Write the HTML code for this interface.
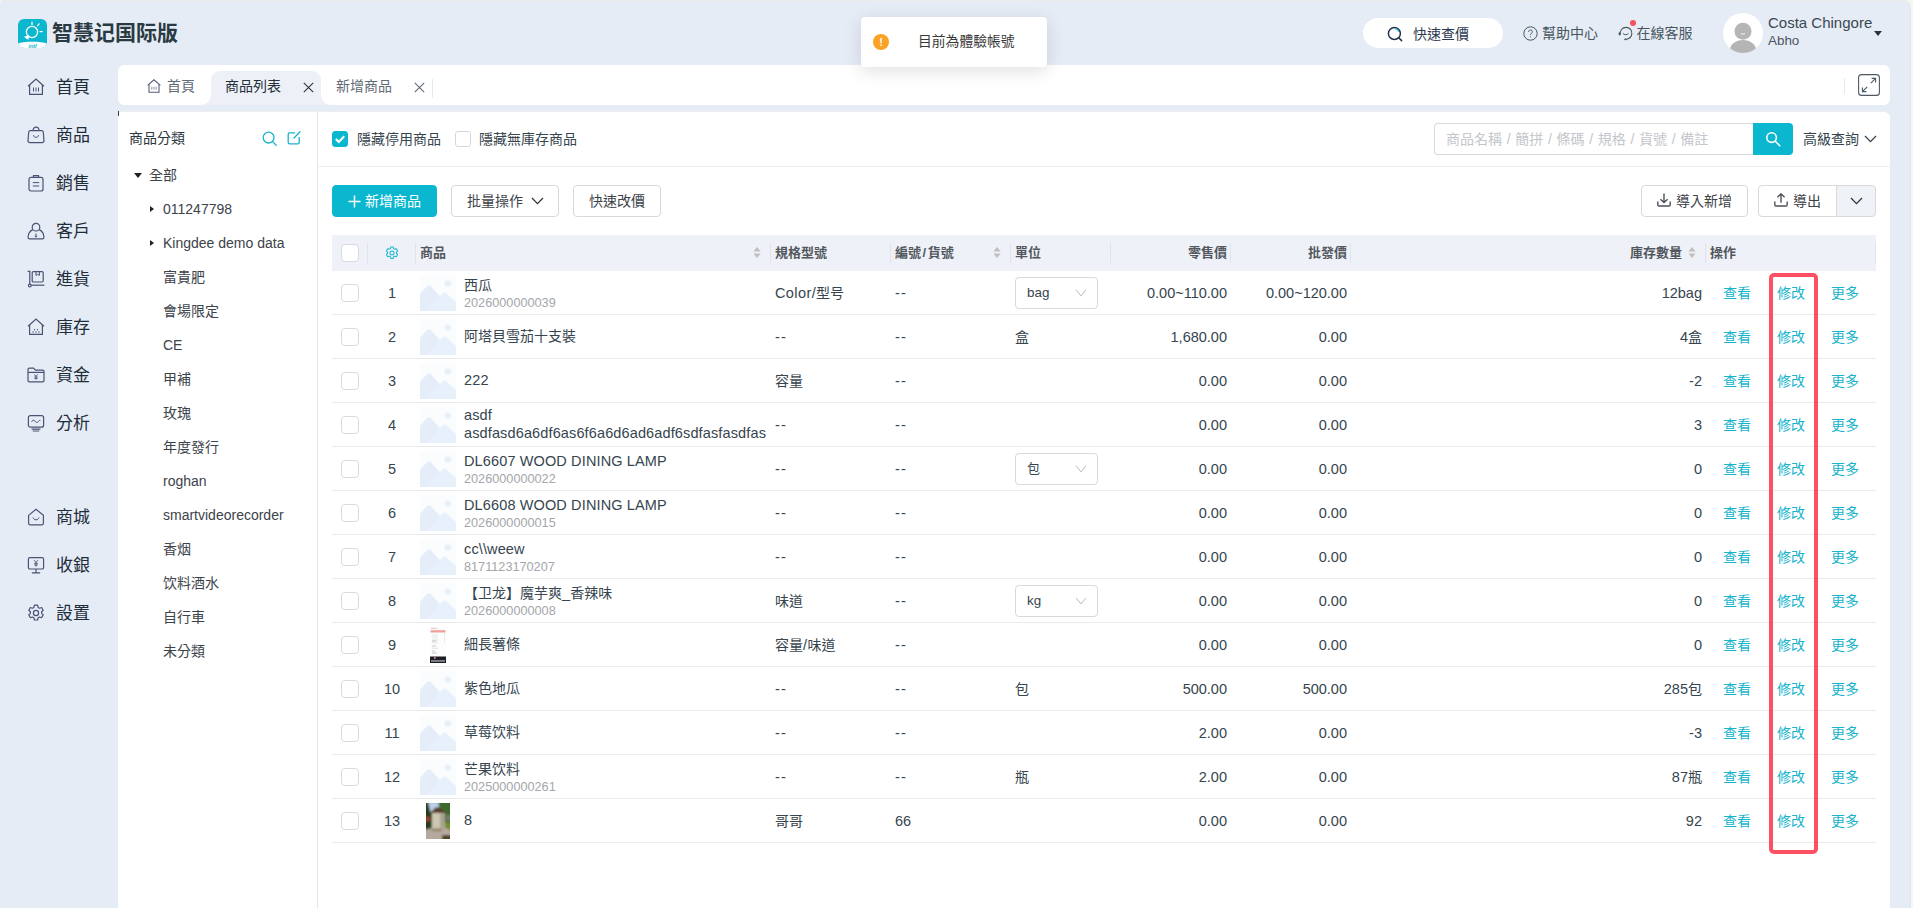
<!DOCTYPE html>
<html lang="zh-Hant">
<head>
<meta charset="utf-8">
<title>商品列表</title>
<style>
*{box-sizing:border-box;margin:0;padding:0}
html,body{width:1913px;height:908px;overflow:hidden;background:#f6f6f6}
body{font-family:"Liberation Sans","Noto Sans CJK TC","Noto Sans CJK SC",sans-serif;color:#36454e;font-size:14px;position:relative}
#app{position:absolute;left:0;top:0;width:1910px;height:920px;background:#e6ecf5;border-radius:4px 8px 0 0;overflow:hidden;box-shadow:inset 0 1px 0 #ecebe9,1px 0 0 #e4e5e7}
.abs{position:absolute}
svg{display:block}
/* logo */
.logo-ic{position:absolute;left:18px;top:19px;width:29px;height:29px;border-radius:6px;background:#0bb7cf;overflow:hidden}
.logo-tx{position:absolute;left:52px;top:17px;height:32px;line-height:32px;font-size:21px;font-weight:700;color:#2b3a42;letter-spacing:0;white-space:nowrap}
/* sidebar */
.nav{position:absolute;left:0;width:118px;height:48px}
.nav svg{position:absolute;left:27px;top:15px}
.nav span{position:absolute;left:56px;top:0;line-height:50px;height:48px;font-size:17px;color:#1f2d3a;white-space:nowrap}
/* top right */
.pill{position:absolute;left:1363px;top:18px;width:140px;height:30px;border-radius:15px;background:#fff}
.pill svg{position:absolute;left:24px;top:8px}
.pill span{position:absolute;left:50px;top:0;line-height:32px;font-size:14px;color:#2b3950}
.tlink{position:absolute;top:18px;height:30px;line-height:30px;font-size:14px;color:#46565f;white-space:nowrap}
.avatar{position:absolute;left:1723px;top:13px;width:40px;height:40px;border-radius:50%;background:#fff;overflow:hidden}
.uname{position:absolute;left:1768px;top:12.5px;font-size:15px;line-height:20px;color:#3a4852;white-space:nowrap}
.ucomp{position:absolute;left:1768px;top:31.5px;font-size:13.4px;line-height:18px;color:#4a5660;white-space:nowrap}
.ucaret{position:absolute;left:1874px;top:31px;width:0;height:0;border-left:4.5px solid transparent;border-right:4.5px solid transparent;border-top:5.5px solid #2a343c}
/* tabs */
.tabs{position:absolute;left:118px;top:65px;width:1772px;height:40px;background:#fff;border-radius:6px}
.tab{position:absolute;top:0;height:40px;line-height:42px;font-size:14px;color:#5f6b76;white-space:nowrap}
.tab-act{position:absolute;left:93px;top:6px;width:110px;height:34px;background:#edf1f7;border-radius:9px 9px 0 0}
.tab-act:before,.tab-act:after{content:"";position:absolute;bottom:0;width:10px;height:10px;background:radial-gradient(circle at 0 0,rgba(237,241,247,0) 9.5px,#edf1f7 10px)}
.tab-act:before{left:-10px}
.tab-act:after{right:-10px;background:radial-gradient(circle at 100% 0,rgba(237,241,247,0) 9.5px,#edf1f7 10px)}
.x{position:absolute;top:16.5px;width:11px;height:11px}
/* category panel */
.cat{position:absolute;left:118px;top:112px;width:200px;height:820px;background:#fff;border-radius:2px 0 0 0;border-right:1px solid #e2e6ee;box-shadow:0 -1px 0 #eeeeee}
.cat h4{position:absolute;left:11px;top:16px;font-size:14px;line-height:20px;font-weight:400;color:#2c363f}
.tree{position:absolute;left:45px;height:34px;line-height:34px;font-size:14px;color:#3c434a;white-space:nowrap}
.car-d{position:absolute;width:0;height:0;border-left:4px solid transparent;border-right:4px solid transparent;border-top:5px solid #222}
.car-r{position:absolute;width:0;height:0;border-top:3.8px solid transparent;border-bottom:3.8px solid transparent;border-left:4.5px solid #222;margin-top:.6px}
/* main */
.main{position:absolute;left:318px;top:112px;width:1572px;height:820px;background:#fff;border-radius:0 6px 0 0;box-shadow:0 -1px 0 #eeeeee}
.hline{position:absolute;left:0;top:54px;width:1572px;height:1px;background:#eeeeee}
.ck{position:absolute;width:16px;height:16px;border-radius:3px;border:1px solid #d4d8de;background:#fff}
.ck.on{background:#0bb7cf;border-color:#0bb7cf}
.lbl{position:absolute;top:17px;line-height:20px;font-size:14px;color:#36454e;white-space:nowrap}
.sinput{position:absolute;left:1116px;top:11px;width:320px;height:32px;border:1px solid #d9d9d9;border-right:0;border-radius:4px 0 0 4px;background:#fff;font-size:14px;line-height:30px;color:#c3c6cb;padding-left:11px;white-space:nowrap;word-spacing:.8px}
.sbtn{position:absolute;left:1435px;top:11px;width:40px;height:32px;background:#0bb7cf;border-radius:0 4px 4px 0}
.adv{position:absolute;left:1485px;top:16px;line-height:22px;font-size:14px;color:#34434c;white-space:nowrap}
.btn{position:absolute;top:73px;height:32px;line-height:30px;border:1px solid #d9d9d9;border-radius:4px;background:#fff;font-size:14px;color:#3c4248;white-space:nowrap}
.btn.pri{background:#0bb7cf;border-color:#0bb7cf;color:#fff}
/* table */
.th{position:absolute;left:14px;top:123px;width:1544px;height:36px;background:#eef1f7;font-size:13px;font-weight:700;color:#53585e}
.th span{position:absolute;top:0;line-height:35px;white-space:nowrap}
.th i{position:absolute;top:8px;width:1px;height:20px;background:#e0e4ea}
.sort{position:absolute;top:12.4px;width:8px;height:11px}
.tb{position:absolute;left:14px;top:159px;width:1544px}
.tr{position:relative;height:44px;border-bottom:1px solid #ebebeb;font-size:14px;color:#36454e}
.l{font-size:14.5px}
.dd{letter-spacing:1.2px}
.spec .l{letter-spacing:.4px}
.spec .dd{letter-spacing:1.2px}
.tr>*{position:absolute}
.cb{left:9px;top:13px;width:18px;height:18px;border:1px solid #d6dae2;border-radius:4px;background:#fff}
.idx{left:36px;width:48px;text-align:center;top:0;line-height:44.5px}
.ph{left:88px;top:4px}
.nm{left:132px;top:0;height:43px;white-space:nowrap}
.nm.one .n1{line-height:42.5px}
.nm.two .n1{line-height:18px;margin-top:5px}
.nm.r4 .n1{line-height:18px;margin-top:2.5px}
.nm .l{letter-spacing:.13px}
.nm.r4 .n1+.n1{margin-top:0}
.nm.two .n2{line-height:16px;font-size:12.7px;color:#a3a6ab;margin-top:.5px}
.c{top:0;line-height:44.5px;white-space:nowrap}
.spec{left:443px}.no{left:563px}.unit{left:683px;width:95px;height:43px}
.ut{position:absolute;left:0;top:0}
.r{text-align:right}
.retail{right:649px}.whole{right:529px}.stock{right:174px}
.sel{position:absolute;left:0;top:6px;width:83px;height:32px;border:1px solid #d9d9d9;border-radius:4px;line-height:30px;font-size:13px}
.sel .l{font-size:13.4px}
.sel>span{position:absolute;left:11px;top:0}
.sel svg{position:absolute;left:59px;top:11px}
.ops{left:1378px;top:0;line-height:45px;white-space:nowrap;font-size:14px}
.ops a{display:inline-block;width:54px;text-align:center;color:#18b4cc}
/* toast */
.toast{position:absolute;left:861px;top:17px;width:186px;height:50px;background:#fff;border-radius:4px;box-shadow:0 4px 18px rgba(0,0,0,.13)}
.toast b{position:absolute;left:12px;top:17px;width:16px;height:16px;border-radius:50%;background:#fba225;color:#fff;font-size:11px;line-height:16px;text-align:center;font-weight:700}
.toast span{position:absolute;left:57px;top:0;line-height:50px;font-size:13.8px;color:#383838;white-space:nowrap}
.red{position:absolute;left:1769px;top:273px;width:49px;height:581px;border:4px solid #fd5065;border-radius:5px}
</style>
</head>
<body>
<div id="app">
<div class="logo-ic"><svg width="29" height="29" viewBox="0 0 29 29"><circle cx="14" cy="13" r="5.6" fill="none" stroke="#fff" stroke-width="1.3"/><path d="M14 3.2v2.4M19.6 6.6l1.6-1.7M22 12.6h2.2" stroke="#fff" stroke-width="1.3" stroke-linecap="round"/><path d="M5.5 17.5c2 .2 3.6-.6 4.6-1.8l1.4 1.6c-.8 1-1.2 2.2-1 3.6-1.200-.8-2.400-1.400-5-3.400z" fill="#fff"/><path d="M0 24.500c5-2.400 24-2.400 29 0V29H0z" fill="#fff"/><text x="14.500" y="28.600" font-size="5.500" font-weight="700" font-style="italic" fill="#0bb7cf" text-anchor="middle" font-family="Liberation Sans, sans-serif">intl</text></svg></div>
<div class="logo-tx">智慧记国际版</div>

<div class="nav" style="top:63px"><svg width="18" height="18" viewBox="0 0 18 18" fill="none" stroke="#4b5274" stroke-width="1.200"><path d="M1 8.200L9 1l8 7.200"/><path d="M2.600 7v9.400h12.800V7"/><path d="M6.500 9.500v4M9 9.500v4M11.500 9.500v4" stroke-width="1"/></svg><span>首頁</span></div>
<div class="nav" style="top:111px"><svg width="18" height="18" viewBox="0 0 18 18" fill="none" stroke="#4b5274" stroke-width="1.200"><path d="M3.500 4.600h11c1 0 1.700.7 1.800 1.600l.7 8.400c.1 1.100-.7 2-1.800 2H2.800c-1.100 0-1.900-.9-1.800-2l.7-8.400c.1-.9.800-1.600 1.800-1.600z"/><path d="M6 4.500C6 2.600 7.300 1.200 9 1.200s3 1.400 3 3.300"/><path d="M6.400 9.200c.5 1.500 1.400 2.200 2.600 2.200s2.100-.7 2.600-2.200" stroke-width="1"/></svg><span>商品</span></div>
<div class="nav" style="top:159px"><svg width="18" height="18" viewBox="0 0 18 18" fill="none" stroke="#4b5274" stroke-width="1.200"><rect x="2" y="3.400" width="14" height="13.600" rx="2"/><path d="M6.500 3.400V1.600h5v1.800"/><path d="M5.800 8.600h6.400M5.800 12h6.400" stroke-width="1"/></svg><span>銷售</span></div>
<div class="nav" style="top:207px"><svg width="18" height="18" viewBox="0 0 18 18" fill="none" stroke="#4b5274" stroke-width="1.200"><circle cx="9" cy="5.200" r="3.800"/><path d="M5.800 7.600C2.800 9 1.200 11.600 1 15.200c0 1 .6 1.600 1.600 1.600h12.800c1 0 1.600-.6 1.600-1.600-.2-3.600-1.800-6.200-4.800-7.600"/><path d="M9 11.500v3.500M7.800 14l1.200 1.200 1.200-1.200" stroke-width="1"/></svg><span>客戶</span></div>
<div class="nav" style="top:255px"><svg width="18" height="18" viewBox="0 0 18 18" fill="none" stroke="#4b5274" stroke-width="1.200"><path d="M.6 1.400h2.200v13.200"/><rect x="5.200" y="1.600" width="11" height="10.400" rx="1.200"/><path d="M9 1.800v3.600l1.700-1 1.700 1V1.800" stroke-width="1"/><circle cx="2.800" cy="15.600" r="1.400"/><path d="M4.200 15.200h13.200"/></svg><span>進貨</span></div>
<div class="nav" style="top:303px"><svg width="18" height="18" viewBox="0 0 18 18" fill="none" stroke="#4b5274" stroke-width="1.200"><path d="M1 8.200L9 1l8 7.200"/><path d="M2.600 7v9.400h12.800V7"/><path d="M5.600 14h1M8.500 14h1M11.400 14h1M7 11.600h1M10 11.600h1" stroke-width="1.300"/></svg><span>庫存</span></div>
<div class="nav" style="top:351px"><svg width="18" height="18" viewBox="0 0 18 18" fill="none" stroke="#4b5274" stroke-width="1.200"><path d="M1 3.600c0-.9.600-1.400 1.400-1.400h4.200l1.800 2h7.200c.9 0 1.400.6 1.400 1.400v8.800c0 .9-.6 1.400-1.400 1.400H2.400c-.9 0-1.400-.6-1.400-1.400z"/><path d="M1 6.400h16"/><path d="M7.400 8.400L9 10.400l1.600-2M9 10.400v3.200M7.400 11h3.200M7.400 12.400h3.200" stroke-width=".9"/></svg><span>資金</span></div>
<div class="nav" style="top:399px"><svg width="18" height="18" viewBox="0 0 18 18" fill="none" stroke="#4b5274" stroke-width="1.200"><rect x="1.400" y="1.600" width="15.200" height="11.600" rx="2"/><path d="M4.600 7.800c1-2 2.200-2.200 3.400-.6s2.400 1.800 3.400.2c.6-.8 1.200-1.200 2-1" stroke-width="1"/><path d="M4.600 15.200h8.800M5.800 17h6.400"/></svg><span>分析</span></div>
<div class="nav" style="top:493px"><svg width="18" height="18" viewBox="0 0 18 18" fill="none" stroke="#4b5274" stroke-width="1.200"><path d="M1.600 7.400L9 1.200l7.400 6.200v7.800c0 1-.6 1.600-1.600 1.600H3.200c-1 0-1.600-.6-1.600-1.600z"/><path d="M6 9.400c.5 1.600 1.500 2.400 3 2.400s2.500-.8 3-2.400" stroke-width="1"/></svg><span>商城</span></div>
<div class="nav" style="top:541px"><svg width="18" height="18" viewBox="0 0 18 18" fill="none" stroke="#4b5274" stroke-width="1.200"><rect x="1.400" y="1.600" width="15.200" height="11.400" rx="1.600"/><path d="M9 13v3.400M4.800 16.800h8.400"/><path d="M7.200 4.200L9 6.600l1.800-2.400M9 6.600v4M7.200 7.400h3.600M7.200 9h3.600" stroke-width=".9"/></svg><span>收銀</span></div>
<div class="nav" style="top:589px"><svg width="18" height="18" viewBox="0 0 18 18" fill="none" stroke="#4b5274" stroke-width="1.200"><path d="M7.400 1.200h3.200l.5 2.200 1.400.8 2.100-.7 1.600 2.800-1.600 1.500v1.600l1.600 1.500-1.600 2.800-2.100-.7-1.400.8-.5 2.200H7.400l-.5-2.200-1.400-.8-2.100.7-1.600-2.800 1.600-1.500V7.800L1.800 6.300l1.600-2.800 2.100.7 1.400-.8z" stroke-linejoin="round"/><circle cx="9" cy="9" r="2.600"/></svg><span>設置</span></div>

<div class="pill"><svg width="16" height="16" viewBox="0 0 16 16" fill="none"><circle cx="7.400" cy="7.400" r="6" stroke="#23314d" stroke-width="1.500"/><path d="M11.800 11.800l2.800 2.800" stroke="#23314d" stroke-width="1.500" stroke-linecap="round"/><path d="M8 2.600c1.800.2 3.200 1.400 3.600 3.200" stroke="#21c1d6" stroke-width="1.200"/></svg><span>快速查價</span></div>
<div class="tlink" style="left:1523px"><svg class="abs" style="left:0;top:8px" width="15" height="15" viewBox="0 0 15 15" fill="none" stroke="#46565f"><circle cx="7.500" cy="7.500" r="6.700" stroke-width="1"/><path d="M5.600 6c0-1.200.8-2 1.900-2s1.900.8 1.900 1.800c0 1.500-1.900 1.500-1.900 3.100" stroke-width="1"/><circle cx="7.500" cy="10.800" r=".6" fill="#46565f" stroke="none"/></svg><span style="margin-left:19px">幫助中心</span></div>
<div class="tlink" style="left:1617px"><svg class="abs" style="left:.5px;top:8px" width="16" height="15" viewBox="0 0 16 15" fill="none" stroke="#46565f" stroke-width="1.100"><path d="M2.300 8.400C1.600 4.600 4.300 1.400 8 1.400c3.800 0 6.400 3 5.800 6.800-.4 2.700-2.300 4.600-5.200 5"/><path d="M4.900 7.400c1 1.700 4.600 1.700 5.600 0" stroke-width="1"/><rect x=".7" y="6.300" width="1.900" height="3.200" rx=".9" fill="#46565f" stroke="none"/><ellipse cx="7.600" cy="13.300" rx="1.500" ry=".9" fill="#46565f" stroke="none"/></svg><i class="abs" style="left:13px;top:2px;width:6px;height:6px;border-radius:50%;background:#f4515c"></i><span style="margin-left:19.500px">在線客服</span></div>
<div class="avatar"><svg width="40" height="40" viewBox="0 0 40 40"><circle cx="20" cy="18.300" r="8.500" fill="#b5b5b5"/><ellipse cx="20" cy="37.500" rx="13.200" ry="10.500" fill="#b5b5b5"/><path d="M18.300 20.300c.5 1.200 2.900 1.200 3.400 0" stroke="#f2f2f2" stroke-width="1.100" fill="none"/></svg></div>
<div class="uname">Costa Chingore</div>
<div class="ucomp">Abho</div>
<div class="ucaret"></div>

<div class="tabs">
<div class="tab-act"></div>
<svg class="abs" style="left:29px;top:14px" width="14" height="14" viewBox="0 0 14 14" fill="none" stroke="#555c7a" stroke-width="1.100"><path d="M.6 6.400L7 .8l6.400 5.600"/><path d="M2 5.400v7.800h10V5.400"/><path d="M4.800 7.800v2.800M7 7.800v2.800M9.200 7.800v2.800" stroke-width=".7"/></svg>
<div class="tab" style="left:49px">首頁</div>
<div class="tab" style="left:107px;color:#242e38">商品列表</div>
<svg class="x" style="left:184.5px" viewBox="0 0 11 11"><path d="M.8.800l9.400 9.400M10.200.8L.8 10.200" stroke="#2c363f" stroke-width="1.100"/></svg>
<div class="tab" style="left:218px">新增商品</div>
<svg class="x" style="left:295.5px" viewBox="0 0 11 11"><path d="M.8.800l9.400 9.400M10.200.8L.8 10.200" stroke="#5f6b76" stroke-width="1.100"/></svg>
<i class="abs" style="left:314px;top:14px;width:1px;height:19px;background:#e6e9ee"></i>
<i class="abs" style="left:1726px;top:13px;width:1px;height:16px;background:#e6e9ee"></i>
<svg class="abs" style="left:1740px;top:9px" width="22" height="22" viewBox="0 0 22 22" fill="none" stroke="#4e5a66" stroke-width="1.100"><rect x=".6" y=".6" width="20.800" height="20.800" rx="3"/><path d="M12.800 9.200l4.600-4.600M13.600 4.400h4v4M9.200 12.800l-4.600 4.600M4.400 13.600v4h4"/></svg>
</div>

<div class="cat">
<h4>商品分類</h4>
<svg class="abs" style="left:144px;top:18.500px" width="15" height="15" viewBox="0 0 15 15" fill="none" stroke="#18b4cc" stroke-width="1.300"><circle cx="6.600" cy="6.600" r="5.400"/><path d="M10.600 10.600l3.600 3.600" stroke-linecap="round"/></svg>
<svg class="abs" style="left:169px;top:19px" width="14" height="14" viewBox="0 0 14 14" fill="none" stroke="#18b4cc" stroke-width="1.300"><path d="M8 1.800H2.600c-.8 0-1.400.6-1.400 1.400v8.200c0 .8.600 1.400 1.400 1.400h8.200c.8 0 1.400-.6 1.400-1.400V6"/><path d="M7 7l6-6.200" stroke-linecap="round"/></svg>
<i class="car-d" style="left:16px;top:60.500px"></i>
<div class="tree" style="left:31px;top:45.5px;font-size:14px">全部</div>
<i class="car-r" style="left:32px;top:93.0px"></i>
<div class="tree" style="top:80.0px">011247798</div>
<i class="car-r" style="left:32px;top:127.0px"></i>
<div class="tree" style="top:114.0px">Kingdee demo data</div>
<div class="tree" style="top:148.0px">富貴肥</div>
<div class="tree" style="top:182.0px">會場限定</div>
<div class="tree" style="top:216.0px">CE</div>
<div class="tree" style="top:250.0px">甲補</div>
<div class="tree" style="top:284.0px">玫瑰</div>
<div class="tree" style="top:318.0px">年度發行</div>
<div class="tree" style="top:352.0px">roghan</div>
<div class="tree" style="top:386.0px">smartvideorecorder</div>
<div class="tree" style="top:420.0px">香烟</div>
<div class="tree" style="top:454.0px">饮料酒水</div>
<div class="tree" style="top:488.0px">自行車</div>
<div class="tree" style="top:522.0px">未分類</div>
</div>
<div class="main">
<span class="ck on" style="left:14px;top:19px"><svg width="14" height="14" viewBox="0 0 14 14" fill="none" stroke="#fff" stroke-width="2"><path d="M2.800 7l3 3 5.400-5.800"/></svg></span>
<span class="lbl" style="left:39px">隱藏停用商品</span>
<span class="ck" style="left:137px;top:19px"></span>
<span class="lbl" style="left:161px">隱藏無庫存商品</span>
<div class="sinput">商品名稱 / 簡拼 / 條碼 / 規格 / 貨號 / 備註</div>
<div class="sbtn"><svg class="abs" style="left:12px;top:8px" width="16" height="16" viewBox="0 0 16 16" fill="none" stroke="#fff" stroke-width="1.600"><circle cx="6.600" cy="6.600" r="4.800"/><path d="M10.200 10.200l4.600 4.600" stroke-linecap="round"/></svg></div>
<div class="adv">高級查詢<svg class="abs" style="left:60.5px;top:7px" width="13" height="8" viewBox="0 0 13 8" fill="none" stroke="#34434c" stroke-width="1.300"><path d="M1 1l5.500 5.600L12 1"/></svg></div>
<div class="hline"></div>
<div class="btn pri" style="left:14px;width:105px"><svg class="abs" style="left:15px;top:8.500px" width="13" height="13" viewBox="0 0 13 13" stroke="#fff" stroke-width="1.500"><path d="M6.500 .5v12M.5 6.500h12"/></svg><span class="abs" style="left:32px;top:0">新增商品</span></div>
<div class="btn" style="left:133px;width:108px"><span class="abs" style="left:15px;top:0">批量操作</span><svg class="abs" style="left:79px;top:11px" width="13" height="8" viewBox="0 0 13 8" fill="none" stroke="#2c363f" stroke-width="1.300"><path d="M1 1l5.500 5.600L12 1"/></svg></div>
<div class="btn" style="left:255px;width:88px"><span class="abs" style="left:15px;top:0">快速改價</span></div>
<div class="btn" style="left:1323px;width:107px"><svg class="abs" style="left:15px;top:7px" width="14" height="14" viewBox="0 0 14 14" fill="none" stroke="#4c5258" stroke-width="1.400"><path d="M7 .6v8.800M3.400 6.200L7 9.600l3.600-3.400M.8 8.600v3.200c0 .8.400 1.200 1.200 1.200h10c.8 0 1.200-.4 1.200-1.200V8.600"/></svg><span class="abs" style="left:34px;top:0">導入新增</span></div>
<div class="btn" style="left:1440px;width:79px;border-radius:4px 0 0 4px"><svg class="abs" style="left:15px;top:7px" width="14" height="14" viewBox="0 0 14 14" fill="none" stroke="#4c5258" stroke-width="1.400"><path d="M7 9.800V1M3.400 4.200L7 .8l3.600 3.400M.8 8.600v3.200c0 .8.400 1.200 1.200 1.200h10c.8 0 1.200-.4 1.200-1.200V8.600"/></svg><span class="abs" style="left:34px;top:0">導出</span></div>
<div class="btn" style="left:1518px;width:40px;border-radius:0 4px 4px 0;background:#eff2f7"><svg class="abs" style="left:13px;top:11px" width="13" height="8" viewBox="0 0 13 8" fill="none" stroke="#2c363f" stroke-width="1.300"><path d="M1 1l5.500 5.600L12 1"/></svg></div>

<div class="th">
<span class="cb" style="position:absolute;left:9px;top:9px"></span>
<i style="left:35px"></i>
<svg class="abs" style="left:53px;top:11px" width="14" height="14" viewBox="0 0 18 18" fill="none" stroke="#18b4cc" stroke-width="1.300"><path d="M7.400 1.200h3.200l.5 2.200 1.400.8 2.100-.7 1.600 2.800-1.600 1.500v1.600l1.600 1.500-1.600 2.800-2.100-.7-1.400.8-.5 2.200H7.400l-.5-2.200-1.400-.8-2.100.7-1.600-2.800 1.600-1.500V7.800L1.800 6.300l1.600-2.800 2.100.7 1.400-.8z" stroke-linejoin="round"/><circle cx="9" cy="9" r="2.600"/></svg>
<i style="left:83px"></i>
<span style="left:88px">商品</span>
<svg class="sort" style="left:421px" viewBox="0 0 8 11"><path d="M4 0l3.600 4.400H.4z" fill="#bfbfbf"/><path d="M4 11L.4 6.600h7.200z" fill="#bfbfbf"/></svg>
<i style="left:438px"></i>
<span style="left:443px">規格型號</span>
<i style="left:558px"></i>
<span style="left:563px">編號<b style="margin:0 1.500px;font-weight:700">/</b>貨號</span>
<svg class="sort" style="left:661px" viewBox="0 0 8 11"><path d="M4 0l3.600 4.400H.4z" fill="#bfbfbf"/><path d="M4 11L.4 6.600h7.200z" fill="#bfbfbf"/></svg>
<i style="left:678px"></i>
<span style="left:683px">單位</span>
<i style="left:778px"></i>
<span style="right:649px">零售價</span>
<i style="left:898px"></i>
<span style="right:529px">批發價</span>
<i style="left:1018px"></i>
<span style="right:194px">庫存數量</span>
<svg class="sort" style="left:1356px" viewBox="0 0 8 11"><path d="M4 0l3.600 4.400H.4z" fill="#bfbfbf"/><path d="M4 11L.4 6.600h7.200z" fill="#bfbfbf"/></svg>
<i style="left:1373px"></i>
<span style="left:1378px">操作</span>
<i style="left:1543px"></i>
</div>

<div class="tb">
<div class="tr"><span class="cb"></span><span class="idx l">1</span><svg class="ph" width="36" height="36" viewBox="0 0 36 36"><rect width="36" height="36" fill="#fafcfe"/><circle cx="27.700" cy="8.500" r="3.300" fill="#e8f0fa"/><path d="M0 36V18.800L7.200 11.200Q9 9.600 10.800 11.200L32 34v2z" fill="#e5edf8"/><path d="M6 36l16.800-17.800q1.800-1.600 3.600 0L36 27v9z" fill="#e7f0fb"/></svg><div class="nm two"><div class="n1">西瓜</div><div class="n2">2026000000039</div></div><span class="c spec"><span class="l">Color/</span>型号</span><span class="c no"><span class="l dd">--</span></span><span class="c unit"><div class="sel"><span><span class="l">bag</span></span><svg width="12" height="8" viewBox="0 0 12 8"><path d="M1 .8l5 6.200L11 .8" fill="none" stroke="#b9bcc1" stroke-width="1"/></svg></div></span><span class="c r retail"><span class="l">0.00~110.00</span></span><span class="c r whole"><span class="l">0.00~120.00</span></span><span class="c r stock"><span class="l">12bag</span></span><span class="ops"><a>查看</a><a>修改</a><a>更多</a></span></div>
<div class="tr"><span class="cb"></span><span class="idx l">2</span><svg class="ph" width="36" height="36" viewBox="0 0 36 36"><rect width="36" height="36" fill="#fafcfe"/><circle cx="27.700" cy="8.500" r="3.300" fill="#e8f0fa"/><path d="M0 36V18.800L7.200 11.200Q9 9.600 10.800 11.200L32 34v2z" fill="#e5edf8"/><path d="M6 36l16.800-17.800q1.800-1.600 3.600 0L36 27v9z" fill="#e7f0fb"/></svg><div class="nm one"><div class="n1">阿塔貝雪茄十支裝</div></div><span class="c spec"><span class="l dd">--</span></span><span class="c no"><span class="l dd">--</span></span><span class="c unit"><span class="ut">盒</span></span><span class="c r retail"><span class="l">1,680.00</span></span><span class="c r whole"><span class="l">0.00</span></span><span class="c r stock"><span class="l">4</span>盒</span><span class="ops"><a>查看</a><a>修改</a><a>更多</a></span></div>
<div class="tr"><span class="cb"></span><span class="idx l">3</span><svg class="ph" width="36" height="36" viewBox="0 0 36 36"><rect width="36" height="36" fill="#fafcfe"/><circle cx="27.700" cy="8.500" r="3.300" fill="#e8f0fa"/><path d="M0 36V18.800L7.200 11.200Q9 9.600 10.800 11.200L32 34v2z" fill="#e5edf8"/><path d="M6 36l16.800-17.800q1.800-1.600 3.600 0L36 27v9z" fill="#e7f0fb"/></svg><div class="nm one"><div class="n1"><span class="l">222</span></div></div><span class="c spec">容量</span><span class="c no"><span class="l dd">--</span></span><span class="c unit"></span><span class="c r retail"><span class="l">0.00</span></span><span class="c r whole"><span class="l">0.00</span></span><span class="c r stock"><span class="l">-2</span></span><span class="ops"><a>查看</a><a>修改</a><a>更多</a></span></div>
<div class="tr"><span class="cb"></span><span class="idx l">4</span><svg class="ph" width="36" height="36" viewBox="0 0 36 36"><rect width="36" height="36" fill="#fafcfe"/><circle cx="27.700" cy="8.500" r="3.300" fill="#e8f0fa"/><path d="M0 36V18.800L7.200 11.200Q9 9.600 10.800 11.200L32 34v2z" fill="#e5edf8"/><path d="M6 36l16.800-17.800q1.800-1.600 3.600 0L36 27v9z" fill="#e7f0fb"/></svg><div class="nm two r4"><div class="n1"><span class="l">asdf</span></div><div class="n1"><span class="l">asdfasd6a6df6as6f6a6d6ad6adf6sdfasfasdfas</span></div></div><span class="c spec"><span class="l dd">--</span></span><span class="c no"><span class="l dd">--</span></span><span class="c unit"></span><span class="c r retail"><span class="l">0.00</span></span><span class="c r whole"><span class="l">0.00</span></span><span class="c r stock"><span class="l">3</span></span><span class="ops"><a>查看</a><a>修改</a><a>更多</a></span></div>
<div class="tr"><span class="cb"></span><span class="idx l">5</span><svg class="ph" width="36" height="36" viewBox="0 0 36 36"><rect width="36" height="36" fill="#fafcfe"/><circle cx="27.700" cy="8.500" r="3.300" fill="#e8f0fa"/><path d="M0 36V18.800L7.200 11.200Q9 9.600 10.800 11.200L32 34v2z" fill="#e5edf8"/><path d="M6 36l16.800-17.800q1.800-1.600 3.600 0L36 27v9z" fill="#e7f0fb"/></svg><div class="nm two"><div class="n1"><span class="l">DL6607 WOOD DINING LAMP</span></div><div class="n2">2026000000022</div></div><span class="c spec"><span class="l dd">--</span></span><span class="c no"><span class="l dd">--</span></span><span class="c unit"><div class="sel"><span>包</span><svg width="12" height="8" viewBox="0 0 12 8"><path d="M1 .8l5 6.200L11 .8" fill="none" stroke="#b9bcc1" stroke-width="1"/></svg></div></span><span class="c r retail"><span class="l">0.00</span></span><span class="c r whole"><span class="l">0.00</span></span><span class="c r stock"><span class="l">0</span></span><span class="ops"><a>查看</a><a>修改</a><a>更多</a></span></div>
<div class="tr"><span class="cb"></span><span class="idx l">6</span><svg class="ph" width="36" height="36" viewBox="0 0 36 36"><rect width="36" height="36" fill="#fafcfe"/><circle cx="27.700" cy="8.500" r="3.300" fill="#e8f0fa"/><path d="M0 36V18.800L7.200 11.200Q9 9.600 10.800 11.200L32 34v2z" fill="#e5edf8"/><path d="M6 36l16.800-17.800q1.800-1.600 3.600 0L36 27v9z" fill="#e7f0fb"/></svg><div class="nm two"><div class="n1"><span class="l">DL6608 WOOD DINING LAMP</span></div><div class="n2">2026000000015</div></div><span class="c spec"><span class="l dd">--</span></span><span class="c no"><span class="l dd">--</span></span><span class="c unit"></span><span class="c r retail"><span class="l">0.00</span></span><span class="c r whole"><span class="l">0.00</span></span><span class="c r stock"><span class="l">0</span></span><span class="ops"><a>查看</a><a>修改</a><a>更多</a></span></div>
<div class="tr"><span class="cb"></span><span class="idx l">7</span><svg class="ph" width="36" height="36" viewBox="0 0 36 36"><rect width="36" height="36" fill="#fafcfe"/><circle cx="27.700" cy="8.500" r="3.300" fill="#e8f0fa"/><path d="M0 36V18.800L7.200 11.200Q9 9.600 10.800 11.200L32 34v2z" fill="#e5edf8"/><path d="M6 36l16.800-17.800q1.800-1.600 3.600 0L36 27v9z" fill="#e7f0fb"/></svg><div class="nm two"><div class="n1"><span class="l">cc\\weew</span></div><div class="n2">8171123170207</div></div><span class="c spec"><span class="l dd">--</span></span><span class="c no"><span class="l dd">--</span></span><span class="c unit"></span><span class="c r retail"><span class="l">0.00</span></span><span class="c r whole"><span class="l">0.00</span></span><span class="c r stock"><span class="l">0</span></span><span class="ops"><a>查看</a><a>修改</a><a>更多</a></span></div>
<div class="tr"><span class="cb"></span><span class="idx l">8</span><svg class="ph" width="36" height="36" viewBox="0 0 36 36"><rect width="36" height="36" fill="#fafcfe"/><circle cx="27.700" cy="8.500" r="3.300" fill="#e8f0fa"/><path d="M0 36V18.800L7.200 11.200Q9 9.600 10.800 11.200L32 34v2z" fill="#e5edf8"/><path d="M6 36l16.800-17.800q1.800-1.600 3.600 0L36 27v9z" fill="#e7f0fb"/></svg><div class="nm two"><div class="n1">【卫龙】魔芋爽<span class="l">_</span>香辣味</div><div class="n2">2026000000008</div></div><span class="c spec">味道</span><span class="c no"><span class="l dd">--</span></span><span class="c unit"><div class="sel"><span><span class="l">kg</span></span><svg width="12" height="8" viewBox="0 0 12 8"><path d="M1 .8l5 6.200L11 .8" fill="none" stroke="#b9bcc1" stroke-width="1"/></svg></div></span><span class="c r retail"><span class="l">0.00</span></span><span class="c r whole"><span class="l">0.00</span></span><span class="c r stock"><span class="l">0</span></span><span class="ops"><a>查看</a><a>修改</a><a>更多</a></span></div>
<div class="tr"><span class="cb"></span><span class="idx l">9</span><svg class="ph" width="36" height="36" viewBox="0 0 36 36"><rect x="10" y="0" width="16" height="36" fill="#fdfdfd"/><rect x="11" y=".8" width="6" height="1.200" fill="#f0c9c6"/><rect x="10.500" y="3.200" width="15" height="2.300" fill="#ef9f97"/><rect x="12" y="7" width="6" height="8" fill="#f0f3f1"/><rect x="24.300" y="6" width=".5" height="10" fill="#d5dad8"/><rect x="12" y="13.500" width="4" height="1" fill="#c4c4c6"/><rect x="12" y="15.600" width="6" height=".7" fill="#dedede"/><rect x="12" y="18.500" width="4" height="1" fill="#c9c9cc"/><rect x="12" y="20.800" width="6" height=".8" fill="#dcdcdc"/><rect x="12" y="23.500" width="3" height="1" fill="#d0d0d4"/><rect x="12" y="25.500" width="5" height="1" fill="#c8c8d0"/><rect x="10" y="29.500" width="16" height="6.500" fill="#1d1d26"/><rect x="14" y="29.500" width="1.600" height="2.500" fill="#c77b90"/><rect x="11" y="33.200" width="14" height="1.500" fill="#9a9aa4"/></svg><div class="nm one"><div class="n1">細長薯條</div></div><span class="c spec">容量<span class="l">/</span>味道</span><span class="c no"><span class="l dd">--</span></span><span class="c unit"></span><span class="c r retail"><span class="l">0.00</span></span><span class="c r whole"><span class="l">0.00</span></span><span class="c r stock"><span class="l">0</span></span><span class="ops"><a>查看</a><a>修改</a><a>更多</a></span></div>
<div class="tr"><span class="cb"></span><span class="idx l">10</span><svg class="ph" width="36" height="36" viewBox="0 0 36 36"><rect width="36" height="36" fill="#fafcfe"/><circle cx="27.700" cy="8.500" r="3.300" fill="#e8f0fa"/><path d="M0 36V18.800L7.200 11.200Q9 9.600 10.800 11.200L32 34v2z" fill="#e5edf8"/><path d="M6 36l16.800-17.800q1.800-1.600 3.600 0L36 27v9z" fill="#e7f0fb"/></svg><div class="nm one"><div class="n1">紫色地瓜</div></div><span class="c spec"><span class="l dd">--</span></span><span class="c no"><span class="l dd">--</span></span><span class="c unit"><span class="ut">包</span></span><span class="c r retail"><span class="l">500.00</span></span><span class="c r whole"><span class="l">500.00</span></span><span class="c r stock"><span class="l">285</span>包</span><span class="ops"><a>查看</a><a>修改</a><a>更多</a></span></div>
<div class="tr"><span class="cb"></span><span class="idx l">11</span><svg class="ph" width="36" height="36" viewBox="0 0 36 36"><rect width="36" height="36" fill="#fafcfe"/><circle cx="27.700" cy="8.500" r="3.300" fill="#e8f0fa"/><path d="M0 36V18.800L7.200 11.200Q9 9.600 10.800 11.200L32 34v2z" fill="#e5edf8"/><path d="M6 36l16.800-17.800q1.800-1.600 3.600 0L36 27v9z" fill="#e7f0fb"/></svg><div class="nm one"><div class="n1">草莓饮料</div></div><span class="c spec"><span class="l dd">--</span></span><span class="c no"><span class="l dd">--</span></span><span class="c unit"></span><span class="c r retail"><span class="l">2.00</span></span><span class="c r whole"><span class="l">0.00</span></span><span class="c r stock"><span class="l">-3</span></span><span class="ops"><a>查看</a><a>修改</a><a>更多</a></span></div>
<div class="tr"><span class="cb"></span><span class="idx l">12</span><svg class="ph" width="36" height="36" viewBox="0 0 36 36"><rect width="36" height="36" fill="#fafcfe"/><circle cx="27.700" cy="8.500" r="3.300" fill="#e8f0fa"/><path d="M0 36V18.800L7.200 11.200Q9 9.600 10.800 11.200L32 34v2z" fill="#e5edf8"/><path d="M6 36l16.800-17.800q1.800-1.600 3.600 0L36 27v9z" fill="#e7f0fb"/></svg><div class="nm two"><div class="n1">芒果饮料</div><div class="n2">2025000000261</div></div><span class="c spec"><span class="l dd">--</span></span><span class="c no"><span class="l dd">--</span></span><span class="c unit"><span class="ut">瓶</span></span><span class="c r retail"><span class="l">2.00</span></span><span class="c r whole"><span class="l">0.00</span></span><span class="c r stock"><span class="l">87</span>瓶</span><span class="ops"><a>查看</a><a>修改</a><a>更多</a></span></div>
<div class="tr"><span class="cb"></span><span class="idx l">13</span><svg class="ph" width="36" height="36" viewBox="0 0 36 36"><defs><clipPath id="c13"><rect x="6" y="0" width="24" height="36"/></clipPath><filter id="b13" x="-10%" y="-10%" width="120%" height="120%"><feGaussianBlur stdDeviation="1"/></filter></defs><g clip-path="url(#c13)"><g filter="url(#b13)"><rect x="4" y="-2" width="28" height="40" fill="#33482a"/><path d="M8 -1h12l-1 5-6 3-4 4z" fill="#bcd0ea"/><path d="M18 -1h13v14h-8l-3-6z" fill="#3d6a2c"/><path d="M4 -1h4l3 12v18H4z" fill="#263c1f"/><rect x="5" y="14" width="5" height="4" fill="#9c3f2e"/><path d="M11 9.500l5-5.500 10 4.500v2H11z" fill="#573d2c"/><rect x="12" y="10" width="13" height="17" fill="#cdc7b0"/><rect x="20" y="10" width="5" height="17" fill="#aaa48f"/><rect x="25" y="19" width="6" height="9" fill="#6f8f2c"/><rect x="26" y="12" width="5" height="6" fill="#6f7f6a"/><path d="M4 27l8-2h14l6 3v10H4z" fill="#b5a99e"/><path d="M22 32h10v6H22z" fill="#4d4a27"/><path d="M12 26h10v2H12z" fill="#8a7a5a"/></g></g></svg><div class="nm one"><div class="n1"><span class="l">8</span></div></div><span class="c spec">哥哥</span><span class="c no"><span class="l">66</span></span><span class="c unit"></span><span class="c r retail"><span class="l">0.00</span></span><span class="c r whole"><span class="l">0.00</span></span><span class="c r stock"><span class="l">92</span></span><span class="ops"><a>查看</a><a>修改</a><a>更多</a></span></div>
</div>
</div>
<div class="toast"><b>!</b><span>目前為體驗帳號</span></div>
<div class="red"></div>
<i class="abs" style="left:117.500px;top:111px;width:1.500px;height:5px;background:#2f4048;border-radius:0 0 1px 1px"></i>
</div>
</body>
</html>
